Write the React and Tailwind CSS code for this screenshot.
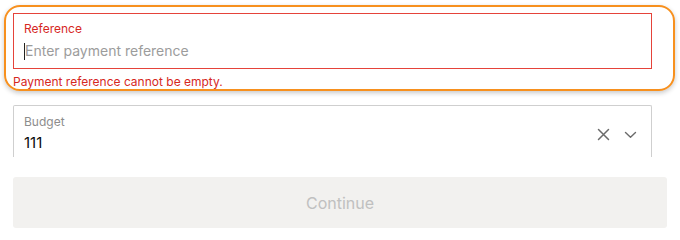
import React from "react";

function App() {
  return (
    <div className="w-[680px] h-[240px] bg-white overflow-hidden" style={{ fontFamily: "Inter, 'Noto Sans', sans-serif" }}>
      <div className="ml-[4px] mt-[5px] w-[671px] border-2 border-[#f7901e] rounded-[16px] shadow-[0_2px_5px_rgba(0,0,0,0.22)] pl-[7px] pr-[21px] pt-[6px]">
        <div className="h-[56px] border border-[#e5433a] px-[10px] pt-[7px]">
          <div className="text-[12px] leading-[16px] text-[#d6281f]">Reference</div>
          <div className="flex items-center mt-[4px] h-[20px]">
            <span className="w-px h-[17px] bg-[#222]" />
            <input
              className="flex-1 outline-none text-[14px] leading-[20px] text-[#111] placeholder:text-[#9c9c9c] bg-transparent"
              placeholder="Enter payment reference"
            />
          </div>
        </div>
        <div className="text-[12px] leading-[15px] text-[#d6281f] mt-[5px]">Payment reference cannot be empty.</div>
      </div>
      <div className="px-[13px] mt-[14px]">
        <div className="w-[639px] h-[52px] border-t border-x border-[#cfcfcf] rounded-t-[2px] flex items-start pl-[10px] pr-[14px] pt-[8px]">
          <div className="flex-1">
            <div className="text-[12px] leading-[16px] text-[#8d8d8d]">Budget</div>
            <div className="text-[15px] leading-[20px] text-[#0a0a0a] mt-[3px]">111</div>
          </div>
          <div className="flex items-center gap-[14px] mt-[14px]">
            <svg width="13" height="13" viewBox="0 0 13 13" fill="none" stroke="#6b6b6b" strokeWidth="1.5" strokeLinecap="round">
              <path d="M1.5 1.5 L11.5 11.5 M11.5 1.5 L1.5 11.5" />
            </svg>
            <svg width="13" height="8" viewBox="0 0 13 8" fill="none" stroke="#6b6b6b" strokeWidth="1.4" strokeLinecap="round" strokeLinejoin="round">
              <path d="M1.5 1.5 L6.5 6.3 L11.5 1.5" />
            </svg>
          </div>
        </div>
        <button className="mt-[20px] w-[654px] h-[51px] bg-[#f2f1ef] rounded-[3px] text-[16px] text-[#c0c0c0]">
          Continue
        </button>
      </div>
    </div>
  );
}

export default App;
